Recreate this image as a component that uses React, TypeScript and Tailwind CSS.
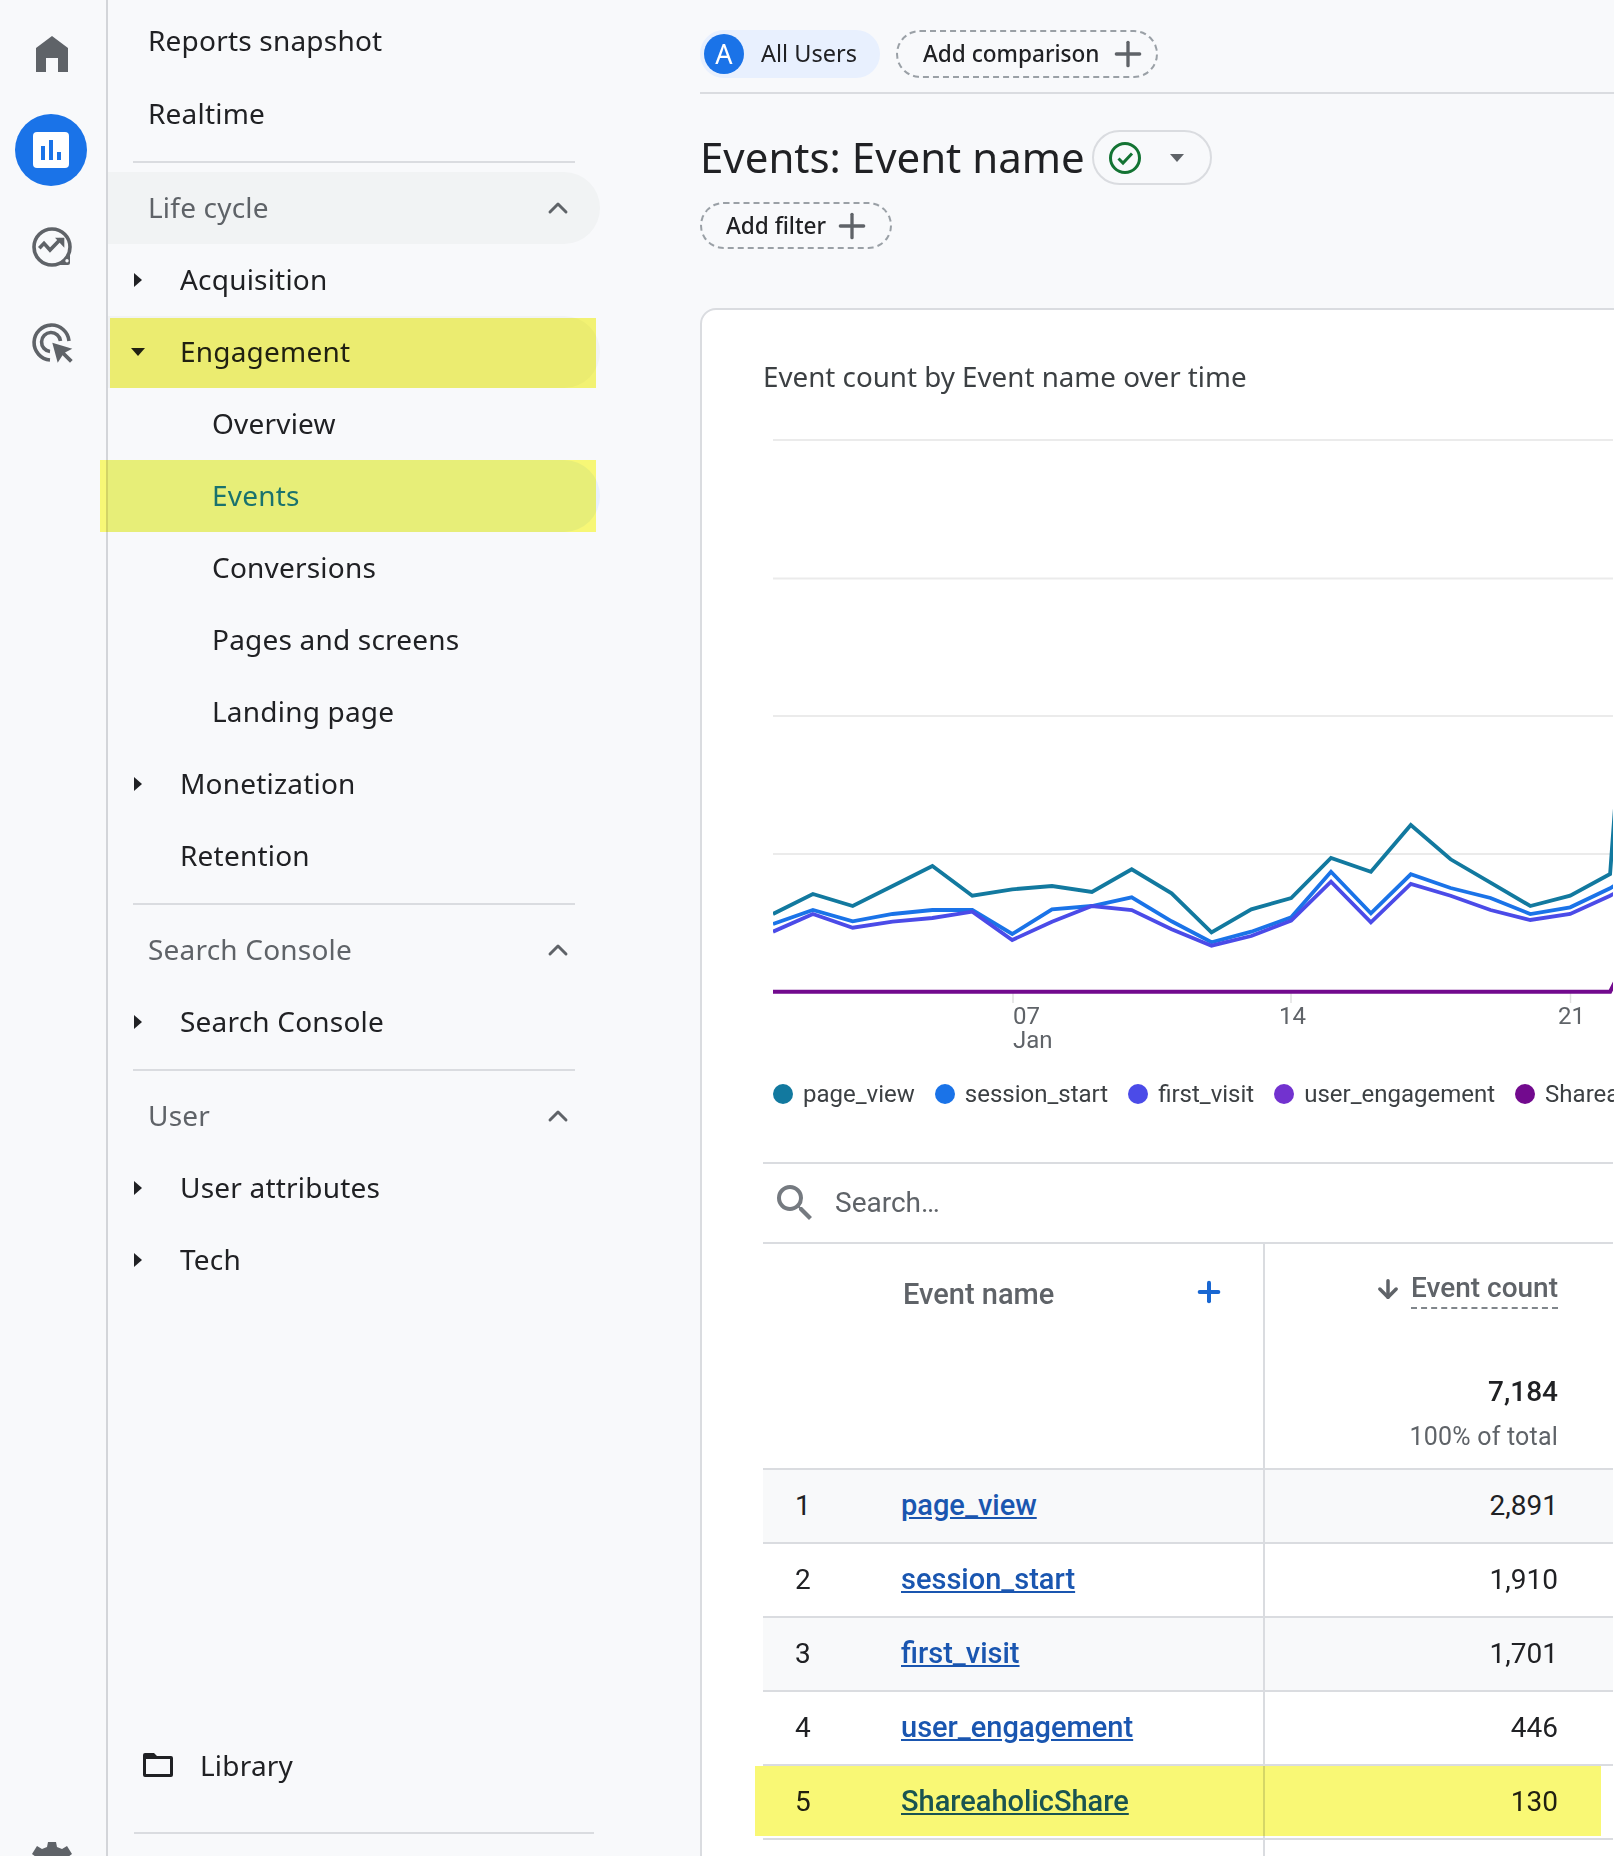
import React from "react";
import { Plus, ChevronUp, ArrowDown } from "lucide-react";

const sans = "font-['Noto_Sans',sans-serif]";

const days = (ys: number[]) =>
  ys.map((z, i) => `${(774 + i * 39.86).toFixed(1)},${(780 + z / 3).toFixed(1)}`).join(" ");

const pageView = [402, 342, 378, 318, 258, 347, 328, 318, 336, 268, 340, 457, 388, 354, 234, 275, 135, 238, 308, 378, 347, 282, -1350];
const sessionStart = [432, 390, 424, 402, 390, 390, 462, 388, 378, 352, 424, 487, 455, 412, 275, 400, 283, 324, 354, 402, 382, 325, 250];
const firstVisit = [455, 402, 443, 425, 414, 395, 480, 425, 378, 390, 448, 497, 468, 422, 305, 427, 312, 347, 390, 420, 402, 347, 280];
const shareaholic = [635, 635, 635, 635, 635, 635, 635, 635, 635, 635, 635, 635, 635, 635, 635, 635, 635, 635, 635, 635, 635, 635, 400];

const legend = [
  { name: "page_view", color: "bg-[#12799f]" },
  { name: "session_start", color: "bg-[#1a73e8]" },
  { name: "first_visit", color: "bg-[#4b4be8]" },
  { name: "user_engagement", color: "bg-[#7232cf]" },
  { name: "ShareaholicShare", color: "bg-[#720a8e]" },
];

const rows = [
  { n: 1, name: "page_view", count: "2,891" },
  { n: 2, name: "session_start", count: "1,910" },
  { n: 3, name: "first_visit", count: "1,701" },
  { n: 4, name: "user_engagement", count: "446" },
  { n: 5, name: "ShareaholicShare", count: "130" },
];

function CaretRight() {
  return <span className="w-0 h-0 border-y-[7px] border-y-transparent border-l-[8px] border-l-[#202124]" />;
}

function CaretDown({ className = "border-t-[#202124]" }: { className?: string }) {
  return <span className={`w-0 h-0 border-x-[7px] border-x-transparent border-t-[8px] ${className}`} />;
}

function NavRow({ label, caret, indent }: { label: string; caret?: boolean; indent?: boolean }) {
  return (
    <div className="h-[72px] flex items-center text-[#202124]">
      <span className="w-[26px] ml-[17px] flex justify-center">{caret && <CaretRight />}</span>
      <span className={`relative -top-px ${indent ? "ml-[61px]" : "ml-[29px]"}`}>{label}</span>
    </div>
  );
}

function SectionHead({ label, active }: { label: string; active?: boolean }) {
  return (
    <div className={`h-[72px] flex items-center justify-between pl-[40px] pr-[26px] text-[#5f6368] rounded-r-full ${active ? "bg-[#f1f3f4]" : ""}`}>
      <span className="relative -top-px">{label}</span>
      <ChevronUp size={32} strokeWidth={2.2} className="text-[#5f6368]" />
    </div>
  );
}

function Divider() {
  return <div className="h-[2px] bg-[#dadce0] mx-[25px]" />;
}

export default function App() {
  return (
    <div className="flex w-[1614px] h-[1856px] overflow-hidden bg-[#f8f9fb] font-['Roboto',sans-serif] text-[#202124]">
      {/* icon rail */}
      <div className="relative w-[108px] shrink-0 border-r-2 border-[#d3d5d9] flex flex-col items-center">
        <svg viewBox="0 0 32 36" className="mt-[36px] w-[32px] h-[36px] -ml-[2px]" fill="#5f6368">
          <path d="M16 0 L32 12 V36 H22 V22 H10 V36 H0 V12 Z" />
        </svg>
        <div className="mt-[42px] -ml-[4px] w-[72px] h-[72px] rounded-full bg-[#1a73e8] flex items-center justify-center">
          <div className="w-[36px] h-[36px] bg-white rounded-[4px] flex items-end justify-center gap-[4px] pb-[8px]">
            <span className="w-[4px] h-[14px] bg-[#1a73e8]" />
            <span className="w-[4px] h-[20px] bg-[#1a73e8]" />
            <span className="w-[4px] h-[8px] bg-[#1a73e8]" />
          </div>
        </div>
        <svg viewBox="0 0 40 40" className="mt-[41px] w-[40px] h-[40px] -ml-[2px]" fill="none" stroke="#5f6368" strokeWidth="3.6">
          <circle cx="20" cy="20" r="18" />
          <path d="M20 38 A18 18 0 0 0 38 20 V36 a2 2 0 0 1 -2 2 Z" fill="#5f6368" stroke="none" />
          <circle cx="35" cy="33.7" r="1.7" fill="#f8f9fb" stroke="none" />
          <path d="M7.3 21.3 L12 16.3 L18 23 L28.7 12" />
          <path d="M32.3 10.7 H23 L32.3 20.7 Z" fill="#5f6368" stroke="none" />
        </svg>
        <svg viewBox="0 0 42 40" className="mt-[56px] w-[42px] h-[40px]" fill="none" stroke="#5f6368" strokeWidth="3.6">
          <path d="M18 37 A17.5 17.5 0 1 1 37 18" />
          <path d="M18 28.5 A9.5 9.5 0 1 1 28.5 18" />
          <path d="M20.3 19.7 L40.3 25.7 L33 29.5 L40.7 37 L38 39.7 L30.5 32.2 L25.7 39.7 Z" fill="#5f6368" stroke="none" />
        </svg>
        <svg viewBox="0 0 40 40" className="absolute left-[32px] top-[1842px] w-[40px] h-[40px]" fill="#5f6368">
          <path d="M16 0 H24 L25 5 L30 7 L35 4 L40 12 L36 15 V25 L40 28 L35 36 L30 33 L25 35 L24 40 H16 L15 35 L10 33 L5 36 L0 28 L4 25 V15 L0 12 L5 4 L10 7 L15 5 Z M20 14 A6 6 0 1 0 20 26 A6 6 0 1 0 20 14 Z" fillRule="evenodd" />
        </svg>
      </div>

      {/* report nav */}
      <div className={`relative w-[592px] shrink-0 text-[28px] tracking-[0.2px] ${sans}`}>
        <div className="w-[492px]">
          <div className="h-[84px] flex items-center pl-[40px]"><span className="relative -top-[2px]">Reports snapshot</span></div>
          <div className="h-[60px] flex items-center pl-[40px]"><span className="relative -top-px">Realtime</span></div>
          <div className="h-[17px]" />
          <Divider />
          <div className="h-[9px]" />
          <SectionHead label="Life cycle" active />
          <NavRow label="Acquisition" caret />
          <div className="relative h-[72px] flex items-center bg-[#f1f3f4] rounded-r-full">
            <span className="w-[26px] ml-[17px] flex justify-center"><CaretDown /></span>
            <span className="relative -top-px ml-[29px]">Engagement</span>
            <div className="absolute left-[2px] top-[2px] w-[486px] h-[70px] bg-[#f9f875] mix-blend-multiply" />
          </div>
          <NavRow label="Overview" indent />
          <div className="relative h-[72px] flex items-center bg-[#e8f0fe] rounded-r-full text-[#1a73e8]">
            <span className="relative -top-px ml-[104px]">Events</span>
            <div className="absolute left-[-8px] top-0 w-[496px] h-[72px] bg-[#fefd78] mix-blend-multiply" />
          </div>
          <NavRow label="Conversions" indent />
          <NavRow label="Pages and screens" indent />
          <NavRow label="Landing page" indent />
          <NavRow label="Monetization" caret />
          <NavRow label="Retention" />
          <div className="h-[11px]" />
          <Divider />
          <div className="h-[9px]" />
          <SectionHead label="Search Console" />
          <NavRow label="Search Console" caret />
          <div className="h-[11px]" />
          <Divider />
          <div className="h-[9px]" />
          <SectionHead label="User" />
          <NavRow label="User attributes" caret />
          <NavRow label="Tech" caret />
        </div>
        <div className="absolute left-[35px] top-[1729px] h-[72px] flex items-center gap-[27px]">
          <svg viewBox="0 0 30 24" className="w-[30px] h-[24px]" fill="#202124">
            <path fillRule="evenodd" d="M2 0 H11 L14 3 H28 a2 2 0 0 1 2 2 V22 a2 2 0 0 1 -2 2 H2 a2 2 0 0 1 -2 -2 V2 a2 2 0 0 1 2 -2 Z M3 6 V21 H27 V6 Z" />
          </svg>
          <span>Library</span>
        </div>
        <div className="absolute left-[26px] top-[1832px] w-[460px] h-[2px] bg-[#dadce0]" />
      </div>

      {/* main */}
      <div className="flex-1 min-w-0 flex flex-col">
        <div className={`h-[94px] shrink-0 pt-[30px] border-b-2 border-[#dadce0] flex items-start gap-[16px] text-[23.5px] whitespace-nowrap ${sans}`}>
          <div className="h-[48px] w-[180px] rounded-full bg-[#e8f0fe] flex items-center pl-[4px]">
            <span className="w-[40px] h-[40px] rounded-full bg-[#1a73e8] text-white flex items-center justify-center text-[27px]">A</span>
            <span className="ml-[17px]">All Users</span>
          </div>
          <div className="h-[48px] w-[262px] rounded-full border-2 border-dashed border-[#9aa0a6] flex items-center pl-[25px] font-medium text-[22.6px]">
            <span>Add comparison</span>
            <Plus size={40} strokeWidth={2} className="text-[#5f6368] ml-[8px]" />
          </div>
        </div>
        <div className={`mt-[36px] h-[55px] shrink-0 flex items-center gap-[7px] ${sans}`}>
          <span className="relative -top-px text-[42px] leading-none">Events: Event name</span>
          <div className="h-[55px] w-[120px] rounded-full border-2 border-[#dadce0] flex items-center pl-[15px]">
            <svg viewBox="0 0 32 32" className="w-[32px] h-[32px]" fill="none" stroke="#137333" strokeWidth="3">
              <circle cx="16" cy="16" r="14.5" />
              <path d="M9.5 16.5 L14 21 L23 11.5" />
            </svg>
            <span className="ml-[29px] flex"><CaretDown className="border-t-[#5f6368]" /></span>
          </div>
        </div>
        <div className={`mt-[17px] h-[47px] w-[192px] shrink-0 rounded-full border-2 border-dashed border-[#9aa0a6] flex items-center pl-[24px] text-[22.6px] font-medium whitespace-nowrap ${sans}`}>
          <span>Add filter</span>
          <Plus size={40} strokeWidth={2} className="text-[#5f6368] ml-[6px]" />
        </div>

        {/* card */}
        <div className="mt-[59px] w-[940px] h-[1600px] shrink-0 bg-white border-2 border-[#dadce0] rounded-[16px] pl-[61px]">
          <div className={`pt-[46px] h-[87px] leading-[40px] text-[27.75px] text-[#3c4043] ${sans}`}>Event count by Event name over time</div>
          <svg viewBox="774 430 840 640" className="block mt-[33px] ml-[10px] w-[840px] h-[640px]" fill="none">
            {[440, 578.5, 716, 854].map((y) => (
              <line key={y} x1="774" x2="1614" y1={y} y2={y} stroke="#ebebeb" strokeWidth="2" />
            ))}
            {[1014, 1292, 1571.5].map((x) => (
              <line key={x} x1={x} x2={x} y1="992" y2="1003" stroke="#e0e0e0" strokeWidth="1.5" />
            ))}
            <polyline points={days(pageView)} stroke="#12799f" strokeWidth="3.8" />
            <polyline points={days(sessionStart)} stroke="#1a73e8" strokeWidth="3.8" />
            <polyline points={days(firstVisit)} stroke="#4b4be8" strokeWidth="3.8" />
            <polyline points={days(shareaholic)} stroke="#720a8e" strokeWidth="4" />
            <g fill="#5f6368" fontSize="24" fontFamily="Roboto, sans-serif">
              <text x="1014" y="1024">07</text>
              <text x="1014" y="1048">Jan</text>
              <text x="1280" y="1024">14</text>
              <text x="1559" y="1024">21</text>
            </g>
          </svg>
          <div className="mt-[9px] ml-[10px] h-[30px] flex items-center gap-[20px] text-[24px] whitespace-nowrap text-[#3c4043]">
            {legend.map((l) => (
              <div key={l.name} className="flex items-center gap-[10px]">
                <span className={`w-[20px] h-[20px] rounded-full ${l.color}`} />
                <span>{l.name}</span>
              </div>
            ))}
          </div>

          {/* table */}
          <div className="mt-[53px] w-[850px] text-[28px]">
            <div className="h-[82px] border-y-2 border-[#dadce0] flex items-center pl-[8px] text-[#5f6368]">
              <svg viewBox="0 0 24 24" className="w-[48px] h-[48px]" fill="#757a80">
                <path d="M15.5 14h-.79l-.28-.27A6.47 6.47 0 0 0 16 9.5 6.5 6.5 0 1 0 9.5 16c1.61 0 3.09-.59 4.23-1.57l.27.28v.79l5 4.99L20.49 19l-4.99-5zm-6 0C7.01 14 5 11.99 5 9.5S7.01 5 9.5 5 14 7.01 14 9.5 11.99 14 9.5 14z" />
              </svg>
              <span className="ml-[16px] text-[28px]">Search…</span>
            </div>
            <div className="grid grid-cols-[502px_1fr] h-[224px]">
              <div className="border-r-2 border-[#dadce0] flex items-start pl-[140px] pt-[29px] text-[#5f6368] font-medium">
                <span className="text-[29px]">Event name</span>
                <Plus size={32} strokeWidth={3} className="text-[#1967d2] ml-[139px] mt-[3px]" />
              </div>
              <div className="flex flex-col items-end pr-[55px]">
                <div className="mt-[25px] flex items-center text-[#5f6368] font-medium">
                  <ArrowDown size={28} strokeWidth={3} className="mr-[9px]" />
                  <span className="border-b-2 border-dashed border-[#80868b] leading-[38px]">Event count</span>
                </div>
                <div className="mt-[62px] font-medium text-[#202124]">7,184</div>
                <div className="mt-[5px] text-[25px] text-[#5f6368] tracking-[0.2px]">100% of total</div>
              </div>
            </div>
            {rows.map((r) => (
              <div key={r.n} className={`relative grid grid-cols-[502px_1fr] h-[74px] border-t-2 border-[#dadce0] ${r.n % 2 === 1 && r.n !== 5 ? "bg-[#f8f9fa]" : ""}`}>
                <div className="border-r-2 border-[#dadce0] flex items-center pl-[32px]">
                  <span className="w-[106px]">{r.n}</span>
                  <a className="text-[#1a56b0] text-[29px] underline font-medium">{r.name}</a>
                </div>
                <div className="flex items-center justify-end pr-[55px]">{r.count}</div>
                {r.n === 5 && <div className="absolute left-[-8px] top-0 w-[846px] h-[70px] bg-[#f9f875] mix-blend-multiply" />}
              </div>
            ))}
            <div className="grid grid-cols-[502px_1fr] h-[60px] border-t-2 border-[#dadce0]">
              <div className="border-r-2 border-[#dadce0]" />
            </div>
          </div>
        </div>
      </div>
    </div>
  );
}
